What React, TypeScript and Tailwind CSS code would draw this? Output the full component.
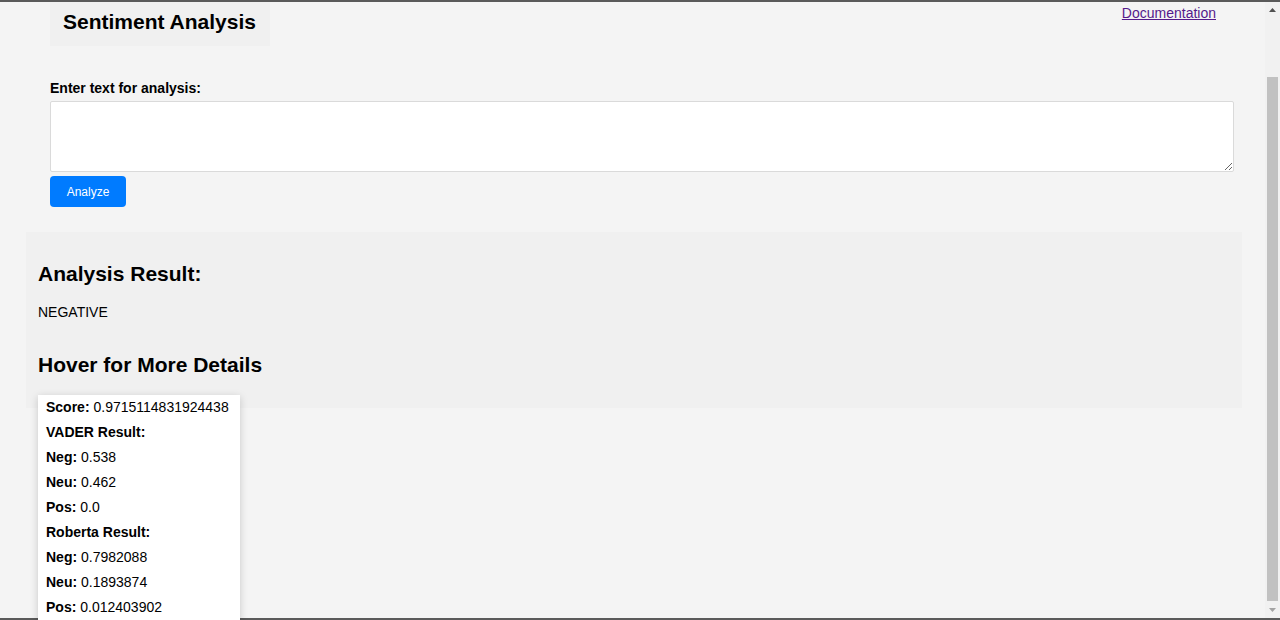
import React from "react";

const rows: { label: string; value?: string }[] = [
  { label: "Score:", value: "0.9715114831924438" },
  { label: "VADER Result:" },
  { label: "Neg:", value: "0.538" },
  { label: "Neu:", value: "0.462" },
  { label: "Pos:", value: "0.0" },
  { label: "Roberta Result:" },
  { label: "Neg:", value: "0.7982088" },
  { label: "Neu:", value: "0.1893874" },
  { label: "Pos:", value: "0.012403902" },
];

export default function App() {
  return (
    <div
      className="w-[1280px] h-[620px] flex flex-col overflow-hidden bg-[#f4f4f4] text-black"
      style={{ fontFamily: '"Liberation Sans", Arial, sans-serif' }}
    >
      <div className="h-[2px] bg-[#5a5a5a] shrink-0" />
      <div className="flex flex-1 min-h-0">
        <div className="flex-1 relative min-w-0">
          {/* header */}
          <div className="flex justify-between items-start">
            <div className="ml-[50px] w-[220px] h-[44px] bg-[#f0f0f0] pl-[13px] pb-[6px] flex items-center">
              <h1 className="text-[21px] font-bold leading-none">Sentiment Analysis</h1>
            </div>
            <a
              href="#"
              className="mr-[49px] mt-[1px] text-[14px] text-[#551a8b] underline"
            >
              Documentation
            </a>
          </div>

          {/* form */}
          <div className="pl-[50px] pr-[31px] mt-[33px]">
            <label className="block text-[14px] font-bold leading-[18px]">
              Enter text for analysis:
            </label>
            <textarea className="block mt-[4px] w-full h-[71px] bg-white border border-[#dadada] rounded-[2px] resize-y" />
            <button className="mt-[4px] w-[76px] h-[31px] bg-[#007bff] text-white text-[12px] rounded-[4px]">
              Analyze
            </button>
          </div>

          {/* result */}
          <div className="ml-[26px] mr-[23px] mt-[25px] h-[176px] bg-[#f0f0f0] px-[12px] pt-[29px]">
            <h2 className="text-[21px] font-bold leading-[26px]">Analysis Result:</h2>
            <p className="text-[14px] leading-[18px] mt-[16px]">NEGATIVE</p>
            <h2 className="text-[21px] font-bold leading-[26px] mt-[31px]">Hover for More Details</h2>
          </div>

          {/* tooltip card */}
          <div className="absolute left-[38px] top-[393px] w-[202px] bg-white shadow-[0_2px_8px_rgba(0,0,0,0.18)] pl-[8px] pb-[10px]">
            {rows.map((r, i) => (
              <div key={i} className="text-[14px] leading-[25px] whitespace-nowrap">
                <span className="font-bold">{r.label}</span>
                {r.value !== undefined && <span> {r.value}</span>}
              </div>
            ))}
          </div>
        </div>

        {/* fake scrollbar */}
        <div className="w-[15px] shrink-0 bg-[#f1f1f1] flex flex-col items-center">
          <div className="h-[17px] flex items-center justify-center">
            <svg width="7" height="4" viewBox="0 0 7 4"><polygon points="3.5,0 7,4 0,4" fill="#505050" /></svg>
          </div>
          <div className="mt-[58px] w-[11px] h-[527px] bg-[#c1c1c1]" />
          <div className="flex-1" />
          <div className="h-[17px] flex items-center justify-center">
            <svg width="7" height="4" viewBox="0 0 7 4"><polygon points="0,0 7,0 3.5,4" fill="#a3a3a3" /></svg>
          </div>
        </div>
      </div>
      <div className="h-[2px] bg-[#5a5a5a] shrink-0" />
    </div>
  );
}
